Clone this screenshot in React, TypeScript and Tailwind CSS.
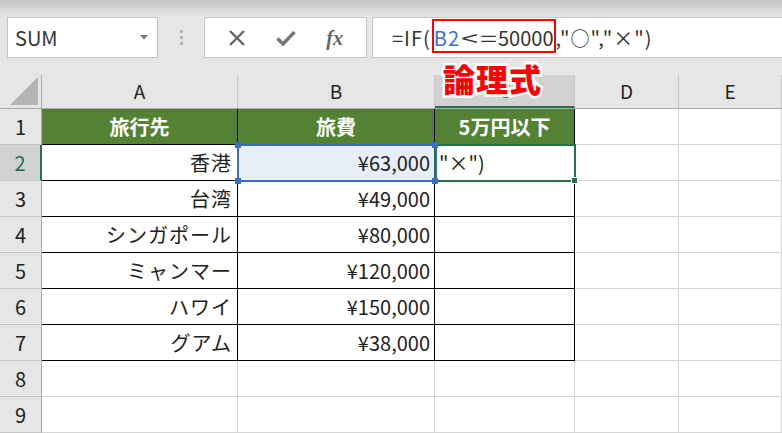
import React from 'react';

const font = "font-['Noto_Sans_CJK_JP','Noto_Sans',sans-serif]";

const cols = ['A', 'B', 'C', 'D', 'E'];
const widths = ['w-[196px]', 'w-[197px]', 'w-[140px]', 'w-[104px]', 'w-[103px]'];

const data: [string, string][] = [
  ['香港', '¥63,000'],
  ['台湾', '¥49,000'],
  ['シンガポール', '¥80,000'],
  ['ミャンマー', '¥120,000'],
  ['ハワイ', '¥150,000'],
  ['グアム', '¥38,000'],
];

function Toolbar() {
  return (
    <div className="flex h-[41px] items-stretch pl-[7px]">
      <div className="flex w-[151px] items-center justify-between border border-[#c6c6c6] bg-white pl-[7px] pr-[9px]">
        <span className="text-[20px] text-[#333]">SUM</span>
        <svg width="8" height="5" viewBox="0 0 8 5">
          <path d="M0 0h8L4 4.5z" fill="#777" />
        </svg>
      </div>
      <div className="flex w-[46px] flex-col items-center justify-center gap-[3px]">
        <div className="h-[3px] w-[3px] bg-[#b4b4b4]" />
        <div className="h-[3px] w-[3px] bg-[#b4b4b4]" />
        <div className="h-[3px] w-[3px] bg-[#b4b4b4]" />
      </div>
      <div className="flex w-[163px] items-center justify-around border border-[#c6c6c6] bg-white px-[8px]">
        <svg width="18" height="18" viewBox="0 0 18 18">
          <path d="M2 2l14 14M16 2L2 16" stroke="#666" strokeWidth="2.4" />
        </svg>
        <svg width="20" height="16" viewBox="0 0 20 16">
          <path d="M1.5 8.5l5.5 5.5L18.5 2" stroke="#777" strokeWidth="3.4" fill="none" />
        </svg>
        <span className="font-['Liberation_Serif',serif] text-[20px] font-bold italic text-[#666]">fx</span>
      </div>
      <div className="ml-[5px] flex flex-1 items-center border-y border-l border-[#c6c6c6] bg-white pl-[19px] text-[20px] text-[#333]">
        <span className="tracking-[1px]">=IF(</span>
        <span className="ml-[3px] tracking-[1px] text-[#3a6fc4]">B2</span>
        <span className="inline-block w-[19px] text-center">
          <span className="inline-block scale-x-150">&lt;</span>
        </span>
        <span className="inline-block w-[19px] text-center">
          <span className="inline-block scale-x-150">=</span>
        </span>
        <span>50000</span>
        <span className="ml-[2px] tracking-[1px]">
          ,"<span className="text-[19px]">○</span>","×")
        </span>
      </div>
    </div>
  );
}

export default function App() {
  return (
    <div className={`relative h-[433px] w-[782px] overflow-hidden bg-[#e6e6e6] ${font}`}>
      <div className="h-[17px] bg-gradient-to-b from-[#c4c4c4] to-[#e6e6e6]" />
      <Toolbar />
      <div className="h-[17px]" />

      <div className="relative">
        {/* column header */}
        <div className="flex h-[34px] border-b border-[#ababab]">
          <div className="flex w-[42px] items-end justify-end border-r border-[#ababab] pb-[3px] pr-[3px]">
            <svg width="28" height="28" viewBox="0 0 28 28">
              <path d="M28 0v28H0z" fill="#b4b4b4" />
            </svg>
          </div>
          {cols.map((c, i) => (
            <div
              key={c}
              className={`${widths[i]} flex items-center justify-center text-[19px] ${
                c === 'C'
                  ? 'border-b-2 border-r border-b-[#217346] border-r-[#c6c6c6] bg-[#d2d2d2] text-[#217346]'
                  : 'border-r border-[#c6c6c6] text-[#222]'
              }`}
            >
              {c}
            </div>
          ))}
        </div>

        {/* rows */}
        {Array.from({ length: 9 }).map((_, r) => {
          const row = r + 1;
          const inTable = row <= 7;
          return (
            <div key={row} className="flex h-[36px]">
              <div
                className={`flex w-[42px] items-center justify-center border-b border-[#c6c6c6] text-[20px] ${
                  row === 2
                    ? 'border-r-2 border-r-[#217346] bg-[#d2d2d2] text-[#217346]'
                    : 'border-r border-r-[#ababab] text-[#222]'
                }`}
              >
                {row}
              </div>
              {cols.map((c, i) => {
                const table = inTable && i < 3;
                const header = row === 1 && i < 3;
                let text = '';
                if (row === 1) text = ['旅行先', '旅費', '5万円以下'][i] ?? '';
                else if (inTable && i === 0) text = data[row - 2][0];
                else if (inTable && i === 1) text = data[row - 2][1];
                else if (row === 2 && i === 2) text = '"×")';
                return (
                  <div
                    key={c}
                    className={`${widths[i]} flex items-center border-b border-r text-[20px] ${
                      table ? 'border-black' : 'border-[#d4d4d4]'
                    } ${
                      header
                        ? 'justify-center bg-[#548235] font-bold text-white'
                        : i === 2
                        ? 'justify-start bg-white pl-[4px] text-[#222]'
                        : row === 2 && i === 1
                        ? 'justify-end bg-[#e8eef8] pr-[4px] text-[#222]'
                        : i === 0
                        ? 'justify-end bg-white pr-[5px] tracking-[1px] text-[#222]'
                        : 'justify-end bg-white pr-[4px] text-[#222]'
                    }`}
                  >
                    {text}
                  </div>
                );
              })}
            </div>
          );
        })}

        {/* selection B2 */}
        <div className="absolute left-[237px] top-[69px] h-[38px] w-[200px] border-2 border-[#3a6fc4]" />
        {/* active C2 */}
        <div className="absolute left-[434px] top-[69px] h-[38px] w-[142px] border-2 border-[#217346]" />
        <div className="absolute left-[235px] top-[67px] h-[6px] w-[6px] bg-[#3a6fc4]" />
        <div className="absolute left-[235px] top-[103px] h-[6px] w-[6px] bg-[#3a6fc4]" />
        <div className="absolute left-[432px] top-[67px] h-[6px] w-[6px] bg-[#3a6fc4]" />
        <div className="absolute left-[432px] top-[103px] h-[6px] w-[6px] bg-[#3a6fc4]" />
        <div className="absolute left-[571px] top-[102px] h-[7px] w-[7px] border border-white bg-[#217346]" />
      </div>

      {/* annotation */}
      <div className="absolute left-[432px] top-[19px] h-[34px] w-[124px] border-[2.5px] border-[#ff0000]" />
      <div className="absolute left-[443px] top-[58px] text-[32px] font-black leading-[40px] tracking-[1px] text-[#ff0000] [paint-order:stroke_fill] [-webkit-text-stroke:5px_white]">
        論理式
      </div>
    </div>
  );
}
